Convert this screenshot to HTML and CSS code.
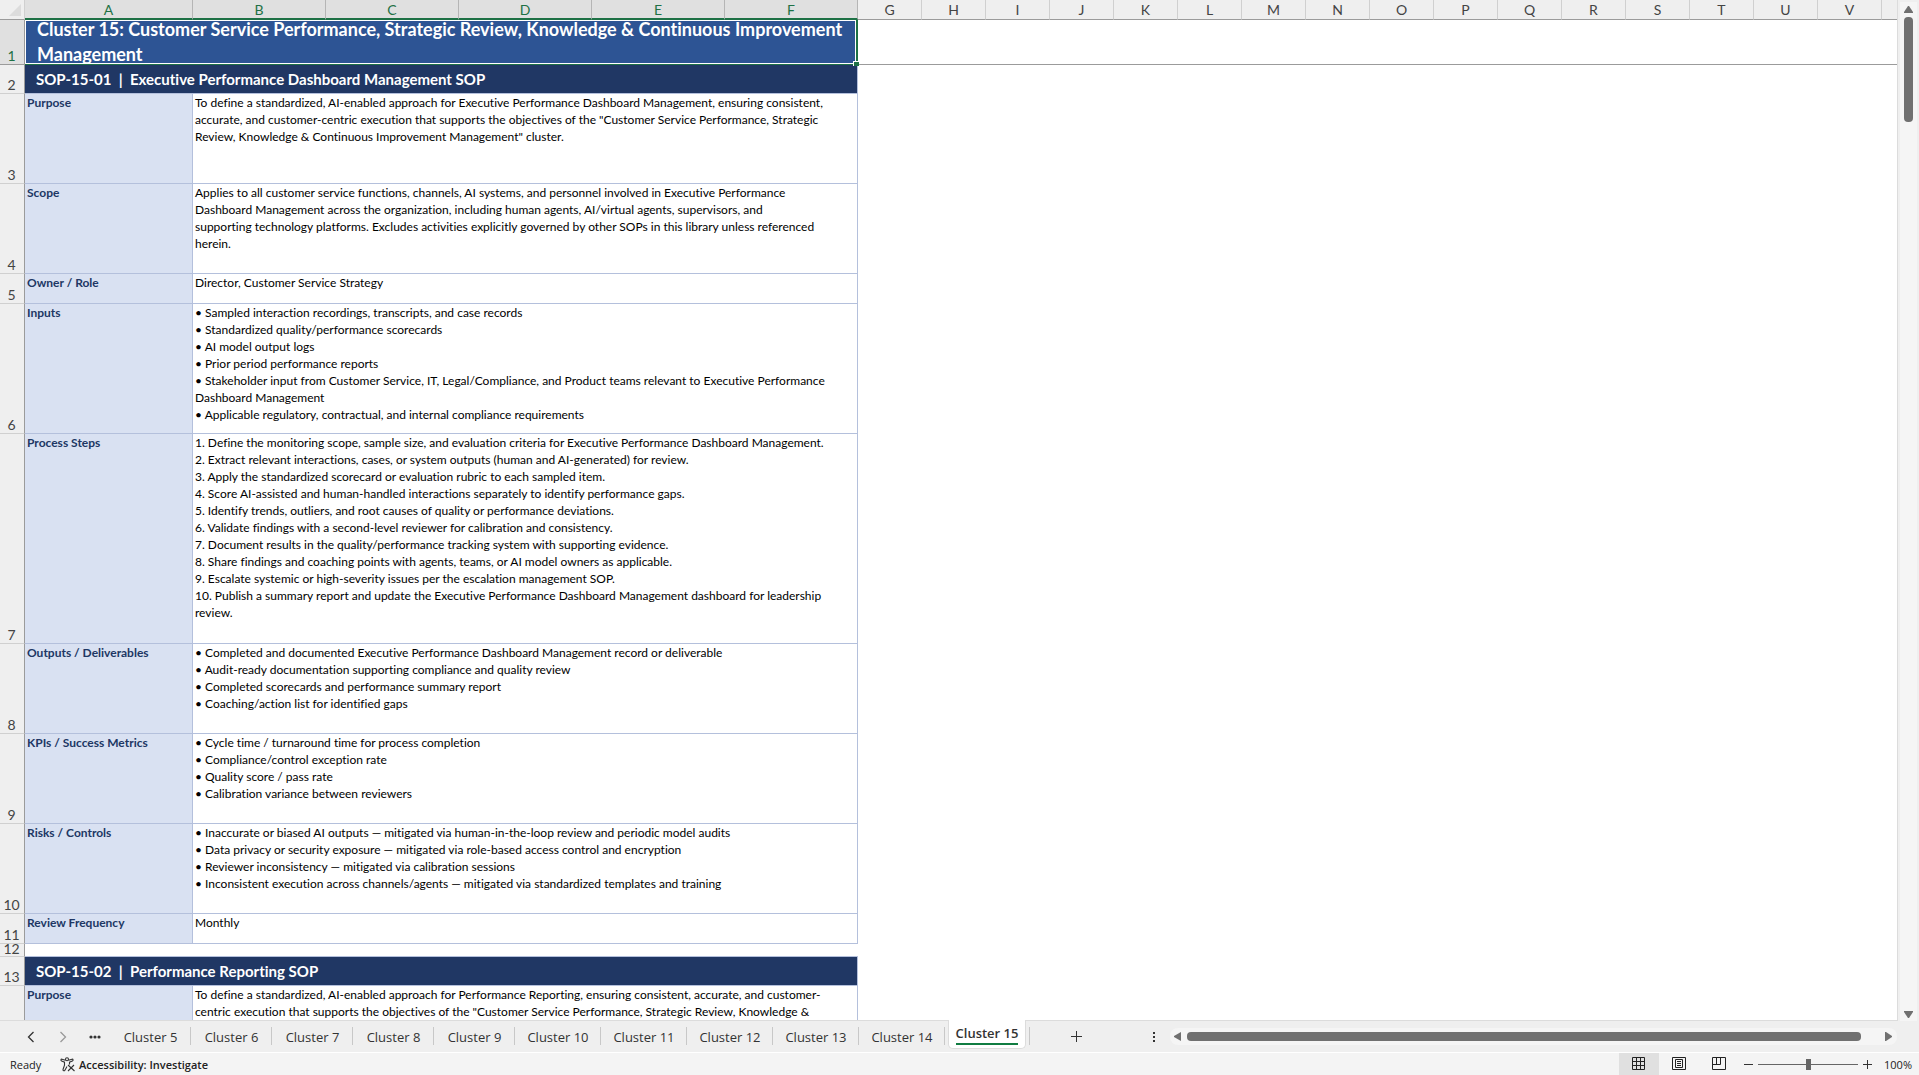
FILE: index.html
```html
<!DOCTYPE html>
<html lang="en">
<head>
  <meta charset="UTF-8">
  <meta name="viewport" content="width=device-width, initial-scale=1.0">
  <title>Cluster 15</title>
  <link rel="stylesheet" href="styles.css">
</head>
<body>
  <main class="workspace">
    <div class="sheet">
      <table class="grid">
        <colgroup>
          <col class="col-num">
          <col class="col-label">
          <col class="col-text" span="5">
          <col class="col-std" span="16">
          <col>
        </colgroup>
        <thead>
          <tr>
            <th class="corner"><svg width="12" height="12" viewBox="0 0 12 12"><path d="M12 0v12H0z" fill="#dcdcdc"/></svg></th>
            <th class="picked">A</th><th class="picked">B</th><th class="picked">C</th><th class="picked">D</th><th class="picked">E</th><th class="picked">F</th>
            <th>G</th><th>H</th><th>I</th><th>J</th><th>K</th><th>L</th><th>M</th><th>N</th><th>O</th><th>P</th><th>Q</th><th>R</th><th>S</th><th>T</th><th>U</th><th>V</th><th class="last"></th>
          </tr>
        </thead>
        <tbody>
          <tr class="row-title">
            <th class="picked">1</th>
            <td class="title" colspan="6"><div class="title-text">Cluster 15: Customer Service Performance, Strategic Review, Knowledge &amp; Continuous Improvement Management</div><span class="handle"></span></td>
            <td class="blank frozen" colspan="17"></td>
          </tr>
          <tr class="row-sop">
            <th>2</th>
            <td class="sop" colspan="6">SOP-15-01&nbsp; |&nbsp; Executive Performance Dashboard Management SOP</td>
            <td class="blank" colspan="17"></td>
          </tr>
          <tr class="row-m">
            <th>3</th>
            <td class="label">Purpose</td>
            <td class="text" colspan="5">To define a standardized, AI-enabled approach for Executive Performance Dashboard Management, ensuring consistent,<br>accurate, and customer-centric execution that supports the objectives of the "Customer Service Performance, Strategic<br>Review, Knowledge &amp; Continuous Improvement Management" cluster.</td>
            <td class="blank" colspan="17"></td>
          </tr>
          <tr class="row-m">
            <th>4</th>
            <td class="label">Scope</td>
            <td class="text" colspan="5">Applies to all customer service functions, channels, AI systems, and personnel involved in Executive Performance<br>Dashboard Management across the organization, including human agents, AI/virtual agents, supervisors, and<br>supporting technology platforms. Excludes activities explicitly governed by other SOPs in this library unless referenced<br>herein.</td>
            <td class="blank" colspan="17"></td>
          </tr>
          <tr class="row-s">
            <th>5</th>
            <td class="label">Owner / Role</td>
            <td class="text" colspan="5">Director, Customer Service Strategy</td>
            <td class="blank" colspan="17"></td>
          </tr>
          <tr class="row-l">
            <th>6</th>
            <td class="label">Inputs</td>
            <td class="text" colspan="5">• Sampled interaction recordings, transcripts, and case records<br>• Standardized quality/performance scorecards<br>• AI model output logs<br>• Prior period performance reports<br>• Stakeholder input from Customer Service, IT, Legal/Compliance, and Product teams relevant to Executive Performance<br>Dashboard Management<br>• Applicable regulatory, contractual, and internal compliance requirements</td>
            <td class="blank" colspan="17"></td>
          </tr>
          <tr class="row-xl">
            <th>7</th>
            <td class="label">Process Steps</td>
            <td class="text" colspan="5">1. Define the monitoring scope, sample size, and evaluation criteria for Executive Performance Dashboard Management.<br>2. Extract relevant interactions, cases, or system outputs (human and AI-generated) for review.<br>3. Apply the standardized scorecard or evaluation rubric to each sampled item.<br>4. Score AI-assisted and human-handled interactions separately to identify performance gaps.<br>5. Identify trends, outliers, and root causes of quality or performance deviations.<br>6. Validate findings with a second-level reviewer for calibration and consistency.<br>7. Document results in the quality/performance tracking system with supporting evidence.<br>8. Share findings and coaching points with agents, teams, or AI model owners as applicable.<br>9. Escalate systemic or high-severity issues per the escalation management SOP.<br>10. Publish a summary report and update the Executive Performance Dashboard Management dashboard for leadership<br>review.</td>
            <td class="blank" colspan="17"></td>
          </tr>
          <tr class="row-m">
            <th>8</th>
            <td class="label">Outputs / Deliverables</td>
            <td class="text" colspan="5">• Completed and documented Executive Performance Dashboard Management record or deliverable<br>• Audit-ready documentation supporting compliance and quality review<br>• Completed scorecards and performance summary report<br>• Coaching/action list for identified gaps</td>
            <td class="blank" colspan="17"></td>
          </tr>
          <tr class="row-m">
            <th>9</th>
            <td class="label">KPIs / Success Metrics</td>
            <td class="text" colspan="5">• Cycle time / turnaround time for process completion<br>• Compliance/control exception rate<br>• Quality score / pass rate<br>• Calibration variance between reviewers</td>
            <td class="blank" colspan="17"></td>
          </tr>
          <tr class="row-m">
            <th>10</th>
            <td class="label">Risks / Controls</td>
            <td class="text" colspan="5">• Inaccurate or biased AI outputs — mitigated via human-in-the-loop review and periodic model audits<br>• Data privacy or security exposure — mitigated via role-based access control and encryption<br>• Reviewer inconsistency — mitigated via calibration sessions<br>• Inconsistent execution across channels/agents — mitigated via standardized templates and training</td>
            <td class="blank" colspan="17"></td>
          </tr>
          <tr class="row-s">
            <th>11</th>
            <td class="label">Review Frequency</td>
            <td class="text" colspan="5">Monthly</td>
            <td class="blank" colspan="17"></td>
          </tr>
          <tr class="row-gap">
            <th><div class="gap-num">12</div></th>
            <td class="gap" colspan="6"></td>
            <td class="blank" colspan="17"></td>
          </tr>
          <tr class="row-sop">
            <th>13</th>
            <td class="sop" colspan="6">SOP-15-02&nbsp; |&nbsp; Performance Reporting SOP</td>
            <td class="blank" colspan="17"></td>
          </tr>
          <tr class="row-m">
            <th></th>
            <td class="label">Purpose</td>
            <td class="text" colspan="5">To define a standardized, AI-enabled approach for Performance Reporting, ensuring consistent, accurate, and customer-<br>centric execution that supports the objectives of the "Customer Service Performance, Strategic Review, Knowledge &amp;</td>
            <td class="blank" colspan="17"></td>
          </tr>
        </tbody>
      </table>
    </div>
    <div class="vscroll">
      <button class="arrow" aria-label="Scroll up"><svg width="9" height="8" viewBox="0 0 9 8"><path d="M4 1h1l4 6v1H0V7z" fill="#707070"/></svg></button>
      <div class="vtrack"><div class="vthumb"></div></div>
      <button class="arrow" aria-label="Scroll down"><svg width="9" height="8" viewBox="0 0 9 8"><path d="M0 0h9v1L5 7H4L0 1z" fill="#707070"/></svg></button>
    </div>
  </main>

  <nav class="tabbar">
    <div class="tabnav">
      <button aria-label="Previous sheet"><svg width="8" height="12" viewBox="0 0 8 12"><path d="M6.500 1L1.500 6l5 5" fill="none" stroke="#333" stroke-width="1.300"/></svg></button>
      <button aria-label="Next sheet"><svg width="8" height="12" viewBox="0 0 8 12"><path d="M1.500 1l5 5-5 5" fill="none" stroke="#999" stroke-width="1.300"/></svg></button>
      <button aria-label="More sheets"><svg width="12" height="4" viewBox="0 0 12 4"><g fill="#333"><circle cx="2" cy="2" r="1.600"/><circle cx="6" cy="2" r="1.600"/><circle cx="10" cy="2" r="1.600"/></g></svg></button>
    </div>
    <div class="tabs">
      <button class="tab">Cluster 5</button>
      <button class="tab">Cluster 6</button>
      <button class="tab">Cluster 7</button>
      <button class="tab">Cluster 8</button>
      <button class="tab">Cluster 9</button>
      <button class="tab wide">Cluster 10</button>
      <button class="tab wide">Cluster 11</button>
      <button class="tab wide">Cluster 12</button>
      <button class="tab wide">Cluster 13</button>
      <button class="tab wide">Cluster 14</button>
      <button class="tab active"><span>Cluster 15</span></button>
    </div>
    <button class="add" aria-label="New sheet"><svg width="13" height="13" viewBox="0 0 13 13"><path d="M6.500 1v11M1 6.500h11" stroke="#333" fill="none"/></svg></button>
    <div class="hscroll-area">
      <svg width="2" height="10" viewBox="0 0 2 10"><path d="M0 0h2v2H0zM0 4h2v2H0zM0 8h2v2H0z" fill="#333"/></svg>
      <div class="hscroll">
        <button class="arrow" aria-label="Scroll left"><svg width="8" height="9" viewBox="0 0 8 9"><path d="M7 0v9L0 5V4z" fill="#707070"/></svg></button>
        <div class="htrack"><div class="hthumb"></div></div>
        <button class="arrow" aria-label="Scroll right"><svg width="8" height="9" viewBox="0 0 8 9"><path d="M0 0h1l6 4v1L1 9H0z" fill="#707070"/></svg></button>
      </div>
    </div>
  </nav>

  <footer class="status">
    <span class="ready">Ready</span>
    <button class="access">
      <svg width="16" height="15" viewBox="0 0 16 15" fill="none" stroke="#333" stroke-width="1.100"><circle cx="7" cy="2.300" r="1.500"/><path d="M5.500 3.300L2 2.200C.8 2 .5 3.700 1.600 4.100L4.500 5.200v3L3 12.500c-.3 1.200 1.300 1.800 1.900.7L7 9.500M8.500 3.300L12 2.200c1.200-.2 1.500 1.500.4 1.900L9.500 5.200v2.300M8 8l6.500 6M14 8l-6 6"/></svg>
      <span>Accessibility: Investigate</span>
    </button>
    <div class="views">
      <button class="view on" aria-label="Normal"><svg width="14" height="14" viewBox="0 0 14 14"><path d="M.5.5h12v12H.5zM4.500.5v12M8.500.5v12M.5 4.500h12M.5 8.500h12" fill="none" stroke="#222"/></svg></button>
      <button class="view" aria-label="Page Layout"><svg width="14" height="14" viewBox="0 0 14 14"><path d="M.5.5h13v12H.5zM3.500 2.500h7v8h-7zM5 4.500h4M5 6.500h4M5 8.500h4" fill="none" stroke="#222"/></svg></button>
      <button class="view" aria-label="Page Break Preview"><svg width="14" height="14" viewBox="0 0 14 14"><path d="M.5.5h13v12H.5zM4.500.5v7M8.500.5v7M.5 7.500h8" fill="none" stroke="#222"/></svg></button>
    </div>
    <button class="zoom-btn" aria-label="Zoom out"><svg width="9" height="9" viewBox="0 0 9 9"><path d="M0 4.500h9" stroke="#333"/></svg></button>
    <input class="zoom" type="range" min="0" max="200" value="100" aria-label="Zoom">
    <button class="zoom-btn" aria-label="Zoom in"><svg width="9" height="9" viewBox="0 0 9 9"><path d="M0 4.500h9M4.500 0v9" stroke="#333"/></svg></button>
    <button class="percent">100%</button>
  </footer>
</body>
</html>
```
FILE: styles.css
```css
* {
  box-sizing: border-box;
}
body {
  margin: 0;
  height: 100vh;
  display: flex;
  flex-direction: column;
  overflow: hidden;
  background: #efefef;
  color: #222;
  font-family: "Open Sans", sans-serif;
}
button {
  display: flex;
  align-items: center;
  justify-content: center;
  margin: 0;
  padding: 0;
  border: 0;
  background: none;
  color: inherit;
  font: inherit;
}
svg {
  display: block;
}

/* worksheet */
.workspace {
  flex: 1;
  min-height: 0;
  display: flex;
}
.sheet {
  flex: 1;
  min-width: 0;
  overflow: hidden;
  background: #fff;
  border-right: 1px solid #dcdcdc;
  border-bottom: 1px solid #dcdcdc;
}
.grid {
  width: 100%;
  table-layout: fixed;
  border-collapse: separate;
  border-spacing: 0;
  font-family: Lato, sans-serif;
  font-size: 12px;
  line-height: 17px;
  font-variant-ligatures: none;
  color: #000;
}
.col-num { width: 25px; }
.col-label { width: 168px; }
.col-text { width: 133px; }
.col-std { width: 64px; }
.grid th,
.grid td {
  padding: 0;
  text-align: left;
  vertical-align: top;
}
.grid th {
  font-size: 14px;
  font-weight: 400;
  text-align: center;
  color: #444;
  background: #efefef;
}
.grid thead th {
  height: 20px;
  line-height: 19px;
  padding-top: 1px;
  border-right: 1px solid #d0d0d0;
  border-bottom: 1px solid #9b9b9b;
}
.grid thead .picked {
  color: #1e7145;
  background: #e0e0e0;
  border-right-color: #b5b5b5;
  border-bottom: 2px solid #1e7145;
  line-height: 17px;
}
.grid thead .last {
  border-right: 0;
}
.grid thead th:not(.picked) {
  line-height: 18px;
}
.grid thead .corner svg {
  margin: 3px 0 0 9px;
}
.grid tbody th {
  vertical-align: bottom;
  line-height: 16px;
  padding-right: 1px;
  border-right: 1px solid #9b9b9b;
  border-bottom: 1px solid #d0d0d0;
}
.grid tbody .picked {
  color: #1e7145;
  background: #e0e0e0;
  border-bottom-color: #9b9b9b;
}
.row-title { height: 45px; }
.row-sop { height: 29px; }
.row-s { height: 30px; }
.row-m { height: 90px; }
.row-l { height: 130px; }
.row-xl { height: 210px; }
.row-gap { height: 13px; }

.grid .title {
  position: relative;
  background: #2d5494;
  border-right: 2px solid #1e7145;
  border-bottom: 1px solid #1e7145;
}
.title-text {
  display: flex;
  align-items: center;
  height: 44px;
  padding: 0 4px 0 11px;
  border: 1px solid #fff;
  overflow: hidden;
  font-size: 18px;
  font-weight: 700;
  line-height: 25px;
  color: #fff;
}
.handle {
  position: absolute;
  right: -3px;
  bottom: -2px;
  width: 6px;
  height: 5px;
  background: #1e7145;
  border-left: 1px solid #fff;
  border-top: 1px solid #fff;
}
.grid .frozen {
  border-bottom: 1px solid #9b9b9b;
}
.grid .sop {
  padding-left: 11px;
  vertical-align: middle;
  font-size: 15px;
  font-weight: 700;
  color: #fff;
  background: #203764;
  border-right: 1px solid #b4c0dc;
  border-bottom: 1px solid #b4c0dc;
}
.grid .label,
.grid .text {
  padding-left: 2px;
  border-right: 1px solid #b4c0dc;
  border-bottom: 1px solid #b4c0dc;
  white-space: nowrap;
}
.grid .label {
  font-weight: 700;
  color: #203764;
  background: #d9e1f2;
}
.grid .gap {
  border-bottom: 1px solid #b4c0dc;
}
.gap-num {
  height: 12px;
  line-height: 10px;
  overflow: hidden;
}

/* vertical scroll bar */
.vscroll {
  width: 21px;
  padding: 2px 2px 0;
  display: flex;
  flex-direction: column;
  align-items: center;
}
.vscroll .arrow {
  width: 17px;
  height: 13px;
  background: #f5f5f5;
}
.vtrack {
  flex: 1;
  width: 17px;
  padding: 2px 4px;
  background: #f5f5f5;
}
.vthumb {
  width: 9px;
  height: 105px;
  border-radius: 4px;
  background: #707070;
}

/* sheet tabs */
.tabbar {
  display: flex;
  height: 32px;
  border-bottom: 1px solid #fff;
  font-size: 13px;
  color: #333;
}
.tabnav {
  display: flex;
  gap: 7px;
  padding: 0 3px 0 18px;
}
.tabnav button {
  width: 25px;
}
.tabs {
  display: flex;
  align-items: flex-start;
}
.tab {
  position: relative;
  height: 31px;
  width: 81px;
}
.tab.wide {
  width: 86px;
}
.tab::after {
  content: "";
  position: absolute;
  right: 0;
  top: 6px;
  height: 18px;
  border-right: 1px solid #c8c8c8;
}
.tab.active {
  width: 78px;
  height: 29px;
  margin: -1px 0 0 3px;
  background: #fff;
  border: 1px solid #dcdcdc;
  border-top: 0;
  border-radius: 0 0 5px 5px;
  font-weight: 600;
}
.tab.active span {
  border-bottom: 2px solid #107c41;
  line-height: 20px;
}
.tab.active::after {
  right: -5px;
  top: 7px;
}
.add {
  width: 50px;
  margin-left: 25px;
}
.hscroll-area {
  display: flex;
  align-items: center;
  gap: 15px;
  width: 766px;
  margin-left: auto;
  padding-right: 22px;
}
.hscroll {
  flex: 1;
  display: flex;
  align-items: center;
  height: 17px;
  padding: 0 4px;
  border-radius: 8px;
  background: #f5f5f5;
}
.htrack {
  flex: 1;
  padding: 0 24px 0 5px;
}
.hthumb {
  height: 9px;
  border-radius: 4px;
  background: #707070;
}

/* status bar */
.status {
  display: flex;
  align-items: center;
  height: 22px;
  background: #f4f4f4;
  font-size: 11px;
}
.ready {
  width: 50px;
  padding-left: 10px;
}
.access {
  margin-left: 10px;
  gap: 3px;
  font-weight: 600;
}
.views {
  display: flex;
  margin: 0 5px 0 auto;
}
.view {
  width: 40px;
  height: 22px;
}
.view.on {
  background: #e0e0e0;
}
.zoom-btn {
  width: 9px;
}
.zoom {
  appearance: none;
  width: 100px;
  height: 12px;
  margin: 0 5px;
  background: linear-gradient(#666, #666) center / 100% 1px no-repeat;
}
.zoom::-webkit-slider-thumb {
  appearance: none;
  width: 5px;
  height: 11px;
  background: #666;
}
.percent {
  width: 47px;
  justify-content: flex-end;
  padding-right: 7px;
}
```
